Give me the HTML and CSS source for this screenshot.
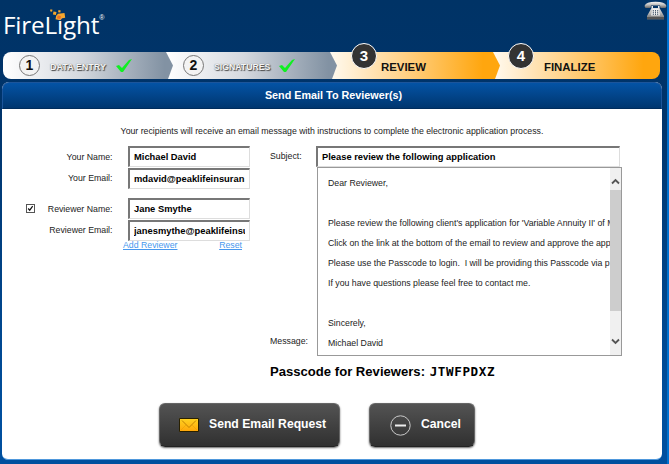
FILE: index.html
```html
<!DOCTYPE html>
<html lang="en">
<head>
<meta charset="utf-8">
<title>FireLight - Send Email To Reviewer(s)</title>
<link rel="stylesheet" href="styles.css">
</head>
<body>
<header class="top">
  <div class="logo">
    <span class="wordmark">FireLight</span><span class="reg">®</span>
    <svg class="sparks" width="17" height="12" viewBox="0 0 17 12"><path fill="#f6a72d" d="M.5.3l2 .5-.5 2-2-.5zM3.500 2.500l3 .6-.6 3-3-.6zM8.500 1l2.200.4-.4 2.200-2.200-.4zM8 4.800l6.500-.8.7 4.800-4 .7-1 1.700-4.700-1 .7-3.500z"/><path fill="#ee7129" d="M7.500 6.500l3.500.6-.6 3-3.400-.6z"/></svg>
  </div>
  <svg class="phone" width="23" height="19" viewBox="0 0 23 19"><defs><linearGradient id="ph" x2="0" y2="1"><stop offset="0" stop-color="#f4f4f4"/><stop offset=".5" stop-color="#bcbcbc"/><stop offset="1" stop-color="#666"/></linearGradient></defs><path fill="url(#ph)" d="M.5 5Q2 .8 11.500.8T22.500 5L21.500 7H16.500L16 4.500H7L6.500 7H1.500z"/><path fill="url(#ph)" d="M7.500 5v2L3 15v3.500h17V15L15.500 7V5H14v2H9V5z"/><path fill="#eee" d="M8.500 8h6l1.500 6.500h-9z"/><path stroke="#34475d" stroke-width=".9" stroke-dasharray="1.400 .5" d="M9.300 9v5M11.500 9v5M13.700 9v5"/><path stroke="#555" stroke-width="2" d="M3 17h17"/></svg>
</header>
<nav class="steps">
  <div class="step s1"><b class="num">1</b><span>DATA ENTRY</span><svg class="tick" width="16" height="14" viewBox="0 0 16 14"><path d="M0 7l3-1 3 3 7-8 3-1-9 13H5z"/></svg></div>
  <div class="step s2"><b class="num">2</b><span>SIGNATURES</span><svg class="tick" width="16" height="14" viewBox="0 0 16 14"><path d="M0 7l3-1 3 3 7-8 3-1-9 13H5z"/></svg></div>
  <div class="step s3"><span>REVIEW</span></div>
  <div class="step s4"><span>FINALIZE</span></div>
  <b class="badge b3">3</b><b class="badge b4">4</b>
</nav>
<main class="panel">
  <h1>Send Email To Reviewer(s)</h1>
  <p class="intro">Your recipients will receive an email message with instructions to complete the electronic application process.</p>
  <div class="form">
    <section class="people">
      <div class="row"><label>Your Name:</label><div class="field">Michael David</div></div>
      <div class="row"><label>Your Email:</label><div class="field">mdavid@peaklifeinsuran</div></div>
      <div class="row gap"><span class="check"><svg width="9" height="9" viewBox="0 0 9 9"><path d="M1.500 4.500l2 2.200L7.300 1.500" fill="none" stroke="#111" stroke-width="1.500"/></svg></span><label>Reviewer Name:</label><div class="field">Jane Smythe</div></div>
      <div class="row"><label>Reviewer Email:</label><div class="field"><div class="clip">janesmythe@peaklifeinsu</div></div></div>
      <div class="links"><a>Add Reviewer</a><a>Reset</a></div>
    </section>
    <section class="mail">
      <div class="subject"><label>Subject:</label><div class="field">Please review the following application</div></div>
      <div class="message"><label>Message:</label>
        <div class="area">
          <div class="text"><p>Dear Reviewer,</p><p>&nbsp;</p><p>Please review the following client's application for 'Variable Annuity II' of M</p><p>Click on the link at the bottom of the email to review and approve the app</p><p>Please use the Passcode to login.&nbsp; I will be providing this Passcode via p</p><p>If you have questions please feel free to contact me.</p><p>&nbsp;</p><p>Sincerely,</p><p>Michael David</p></div>
          <div class="scroll"><svg width="11" height="22" viewBox="0 0 11 22"><path d="M2 15.500l3.500-3.500L9 15.500"/></svg><i></i><svg width="11" height="44" viewBox="0 0 11 44"><path d="M2 28.500l3.500 3.500L9 28.500"/></svg></div>
        </div>
      </div>
      <div class="pass">Passcode for Reviewers: <span>JTWFPDXZ</span></div>
    </section>
  </div>
  <div class="actions">
    <div class="btn send"><svg width="20" height="14" viewBox="0 0 20 14"><defs><linearGradient id="env" x2="0" y2="1"><stop offset="0" stop-color="#ffd321"/><stop offset="1" stop-color="#ffa60a"/></linearGradient></defs><path fill="url(#env)" stroke="#292000" d="M.5.5h19v13H.5z"/><path fill="none" stroke="#b97a00" d="M3 2.500l7 7L17 2.500" stroke-width=".9"/><path fill="none" stroke="#e79a00" d="M2 12l5-5M18 12l-5-5" stroke-width=".5"/></svg><span>Send Email Request</span></div>
    <div class="btn cancel"><svg width="21" height="21" viewBox="0 0 21 21"><circle cx="10.500" cy="10.500" r="9.700" fill="none" stroke="#c9c9c9" stroke-width="1"/><path stroke="#eee" stroke-width="2" d="M5 10.500h11"/></svg><span>Cancel</span></div>
  </div>
</main>
</body>
</html>
```
FILE: styles.css
```css
* { box-sizing: border-box; }
body {
  margin: 0; width: 669px; height: 464px; overflow: hidden; padding-left: 2px;
  font: 8.75px/12px "Liberation Sans", Arial, sans-serif; color: #222;
  background: linear-gradient(#003366, #00346b 25%, #004f9e 90%);
  border-right: 2px solid #0071cf;
}
p, h1 { margin: 0; }
.top { height: 52px; display: flex; justify-content: space-between; padding-left: 1px; }
.logo { position: relative; color: #fff; padding-top: 8px; display: flex; }
.wordmark { font: 24.3px/34px "Open Sans", sans-serif; letter-spacing: -0.18px; }
.reg { font-size: 7px; line-height: 20px; }
.sparks { position: absolute; left: 47px; top: 9px; }
.phone { margin: 1px 0 0; }
.steps { position: relative; display: flex; width: 658px; height: 27px; margin-left: 1px; }
.step { display: flex; align-items: center; height: 27px; white-space: nowrap; }
.s1, .s2 { background: linear-gradient(90deg, #fff, #d5d9df 45%, #8292a3 95%); font-size: 9px; font-weight: bold; color: #f5f5f5; text-shadow: 1px 1px 1px #444, 0 0 1px #666; clip-path: polygon(0 0, calc(100% - 7px) 0, 100% 50%, calc(100% - 5px) 100%, 0 100%); }
.s1 { width: 170px; border-radius: 8px 0 0 8px; padding-left: 16px; z-index: 4; }
.s2 { width: 171px; margin-left: -7px; padding-left: 17px; z-index: 3; }
.s3, .s4 { background: linear-gradient(90deg, #fffaf0, #ffd590 40%, #ffa60e 90%); font-size: 11.4px; font-weight: bold; color: #111; }
.s3 { width: 170px; margin-left: -7px; padding: 3px 0 0 51px; z-index: 2; clip-path: polygon(0 0, calc(100% - 7px) 0, 100% 50%, calc(100% - 5px) 100%, 0 100%); }
.s4 { width: 167px; margin-left: -7px; padding: 3px 0 0 51px; border-radius: 0 8px 8px 0; }
.num { width: 21px; height: 21px; border: 1.5px solid #777; border-radius: 50%; background: #f3f3f3; color: #111; font-size: 14px; line-height: 18px; text-align: center; text-shadow: none; margin-right: 10px; }
.s1 span { width: 57px; padding-top: 2px; }
.s2 span { width: 56px; padding-top: 2px; font-size: 8.7px; }
.tick { fill: #10ef22; margin-left: 9px; }
.badge { position: absolute; z-index: 6; width: 26px; height: 26px; top: -9px; border: 1.5px solid #fff; border-radius: 50%; background: #333; color: #fff; font-size: 15px; line-height: 23px; text-align: center; }
.b3 { left: 348px; }
.b4 { left: 505px; }
.panel { width: 660px; height: 378px; margin-top: 3px; background: #fff; border-radius: 7px 7px 6px 6px; border-bottom: 1px solid #4f98dc; }
h1 { height: 27px; border-radius: 7px 7px 0 0; background: linear-gradient(#0453a5, #00366f); border: 1px solid #1c559b; border-bottom-color: #002c5c; color: #fff; text-align: center; font-size: 10.8px; line-height: 25px; padding-left: 3px; }
.intro { text-align: center; padding-top: 16px; height: 37px; white-space: nowrap; }
.form { display: flex; height: 243px; }
.people { width: 248px; margin-right: 20px; }
.row { display: flex; align-items: center; height: 21.500px; justify-content: flex-end; }
.row label { width: 70px; text-align: right; margin-right: 15.5px; white-space: nowrap; }
.gap { margin-top: 9px; }
.field { border: 2px solid #777; border-right: 1px solid #ddd; border-bottom: 1px solid #ddd; height: 21px; width: 122px; padding-left: 4px; font-weight: bold; font-size: 9.35px; line-height: 18px; color: #000; white-space: nowrap; }
.clip { width: 111px; overflow: hidden; }
.check { width: 9px; height: 9px; border: 1px solid #555; display: flex; align-items: center; justify-content: center; margin-right: 8px; }
.links { display: flex; justify-content: space-between; padding: 0 8px 0 121px; color: #4798ee; line-height: 9px; }
.links a { text-decoration: underline; }
.mail { width: 352px; }
.subject { display: flex; height: 21px; line-height: 21px; }
.subject label { width: 46px; }
.subject .field { width: 304px; }
.message { display: flex; height: 189px; }
.message label { width: 47px; align-self: flex-end; margin-bottom: 9px; }
.area { width: 305px; border: 1px solid #999; display: flex; }
.text { width: 292px; overflow: hidden; white-space: nowrap; padding: 5px 0 0 10px; line-height: 20px; }
.scroll { width: 11px; background: #f0f0f0; display: flex; flex-direction: column; }
.scroll svg { fill: none; stroke: #555; stroke-width: 1.8; display: block; }
.scroll i { height: 121px; background: #cdcdcd; }
.pass { font-size: 13.1px; font-weight: bold; line-height: 20px; margin-top: 6px; color: #000; white-space: nowrap; }
.pass span { font: bold 12.6px "DejaVu Sans Mono", monospace; letter-spacing: .6px; margin-left: 1px; }
.actions { display: flex; gap: 29px; padding: 14px 0 0 157px; }
.btn { height: 44px; border-radius: 6px; border: 1px solid #666; border-bottom: 1px solid #222; background: linear-gradient(#535353, #303030); box-shadow: 0 1px 2px #666; color: #fff; font: bold 12.2px/14px "Liberation Sans", sans-serif; display: flex; align-items: center; white-space: nowrap; }
.send { width: 181px; padding-left: 19px; }
.cancel { width: 106px; padding-left: 20px; }
.btn span { margin: -3px 0 0 10px; }
```
